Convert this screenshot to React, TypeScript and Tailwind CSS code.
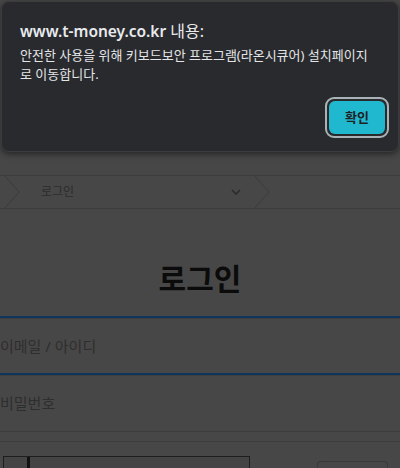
const Chevron = () => (
    <svg width="18" height="34" viewBox="0 0 18 34" className="shrink-0">
        <path d="M1 0 L16 17 L1 34" fill="none" stroke="#3c3c3c" strokeWidth="1" />
    </svg>
)

export default function App() {
    return (
        <div className="relative w-[400px] h-[468px] overflow-hidden bg-[#474747] font-['Noto_Sans','Noto_Sans_CJK_KR',sans-serif]">
            {/* page behind the alert */}
            <div className="h-[175px] bg-[#474747]" />

            <div className="h-[34px] flex items-center border-y border-[#3d3d3d]">
                <div className="ml-[3px]"><Chevron /></div>
                <span className="ml-[20px] text-[12px] text-[#2c2c2c] w-[190px]">로그인</span>
                <svg width="10" height="6" viewBox="0 0 10 6">
                    <path d="M1 1 L5 5 L9 1" fill="none" stroke="#2a2a2a" strokeWidth="1.5" />
                </svg>
                <div className="ml-[12px]"><Chevron /></div>
            </div>

            <h1 className="mt-[50px] text-center text-[30px] leading-[36px] font-bold text-[#0b0b0b] font-['Noto_Sans_CJK_KR',sans-serif]">로그인</h1>

            <div className="mt-[21px] border-t-2 border-[#0f355c]">
                <div className="h-[55px] border-t border-[#3f3f3f] flex items-center">
                    <span className="text-[15px] text-[#2e2e2e]">이메일 / 아이디</span>
                </div>
            </div>
            <div className="border-t-2 border-[#0f355c]">
                <div className="h-[56px] border-t border-[#3f3f3f] flex items-center">
                    <span className="text-[15px] text-[#2e2e2e]">비밀번호</span>
                </div>
            </div>
            <div className="h-[10px] border-t border-[#3c3c3c]" />
            <div className="border-t border-[#3c3c3c] flex items-start pt-[14px]">
                <div className="ml-[3px] w-[247px] h-[20px] border border-[#1e1e1e] border-b-0 bg-[#444444] flex">
                    <div className="ml-[23px] w-[3px] bg-[#111]" />
                </div>
                <div className="ml-[67px] mt-[5px] w-[71px] h-[20px] rounded-t-[4px] border border-[#3a3a3a] border-b-0" />
            </div>

            {/* alert dialog */}
            <div className="absolute left-[1px] top-[1px] w-[398px] h-[151px] rounded-[8px] bg-[#292a2d] border border-[#3b3c3e] shadow-[0_2px_6px_rgba(0,0,0,0.5)] text-[#e8eaed]">
                <div className="pl-[18px] pt-[19px]">
                    <div className="text-[15.5px] leading-[20px] font-semibold">
                        www.t-money.co.kr <span className="font-normal text-[16px]">내용:</span>
                    </div>
                    <p className="mt-[5px] pr-[20px] text-[13px] leading-[19px] text-[#e3e5e8]">
                        안전한 사용을 위해 키보드보안 프로그램(라온시큐어) 설치페이지로 이동합니다.
                    </p>
                </div>
                <div className="absolute left-[323px] top-[95px] w-[64px] h-[41px] rounded-[9px] border-2 border-[#a9b3b7] p-[2px]">
                    <div className="w-full h-full rounded-[6px] bg-[#1fb8cf] flex items-center justify-center text-[13px] font-semibold text-[#202124]">
                        확인
                    </div>
                </div>
            </div>
        </div>
    )
}
